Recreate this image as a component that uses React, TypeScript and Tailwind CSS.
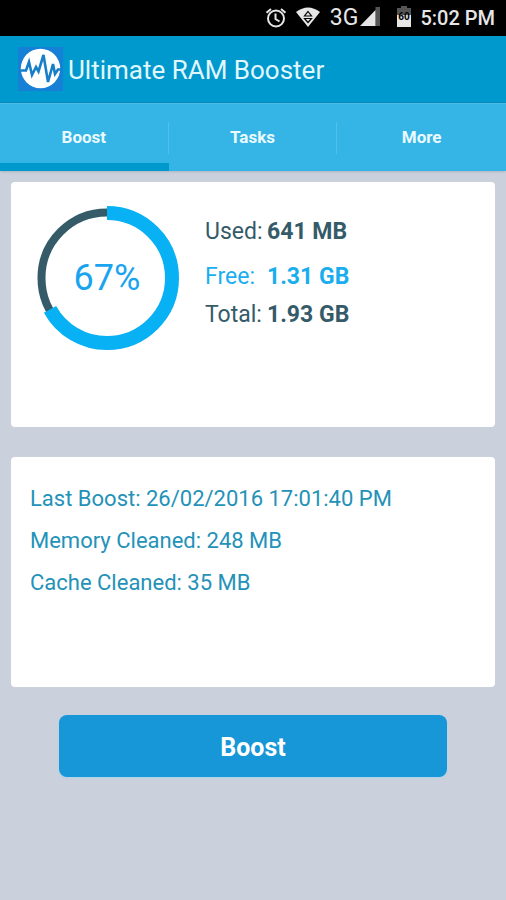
const tabs = ["Boost", "Tasks", "More"];

const memory = [
  { label: "Used:", value: "641 MB", className: "mb-[15px] text-[#355b69]" },
  { label: "Free:", value: "1.31 GB", className: "mb-2 text-[#1aaeee]" },
  { label: "Total:", value: "1.93 GB", className: "text-[#355b69]" },
];

const stats = [
  "Last Boost: 26/02/2016 17:01:40 PM",
  "Memory Cleaned: 248 MB",
  "Cache Cleaned: 35 MB",
];

function StatusBar() {
  return (
    <div className="flex h-9 items-center justify-end bg-black pr-[11px] text-[#e6e6e6]">
      <svg className="mr-2 h-6 w-6" viewBox="0 0 24 24" fill="none" stroke="currentColor" strokeWidth="2">
        <circle cx="12" cy="12.500" r="8" />
        <path d="M11.500 7.500v5.500l4 2.500M2.500 6.800l4.500-3.800M21.500 6.800l-4.500-3.800" />
      </svg>
      <svg className="mr-2.5 h-6 w-6" viewBox="0 0 24 24">
        <path d="M0 6Q12-3 24 6L12 21z" fill="currentColor" />
        <path d="M12 5.500l3.500 4.500h-7zM8.500 12.500h7l-3.500 4z" fill="none" stroke="black" strokeWidth="1.200" />
      </svg>
      <span className="text-[23px] leading-6">3G</span>
      <svg className="mr-4 ml-0.5 h-6 w-5" viewBox="0 0 20 24">
        <path d="M15.500 1H20v19h-4.500z" fill="#555" />
        <path d="M15.500 4v16H0z" fill="currentColor" />
      </svg>
      <svg className="mr-2 h-6 w-4" viewBox="0 0 16 24">
        <path d="M5 0h6v2h4v8H1V2h4z" fill="#555" />
        <path d="M1 9h14v12H1z" fill="currentColor" />
        <text x="8" y="14" textAnchor="middle" fontSize="10" fontWeight="bold">60</text>
      </svg>
      <span className="text-xl font-medium">5:02 PM</span>
    </div>
  );
}

function Logo() {
  return (
    <svg className="h-11 w-[45px]" viewBox="0 0 45 44">
      <path d="M0 0h45v44H0z" fill="#167fd6" />
      <circle cx="22.500" cy="21.500" r="19.700" fill="white" />
      <path
        d="M3 23.500h5L11 15l3 13 4-8 2.500 4.500L25.500 8l4.500 27 5-18 2 10 3-4.500h3"
        fill="none"
        stroke="#167fc8"
        strokeWidth="2.600"
      />
    </svg>
  );
}

function UsageRing({ percent }: { percent: number }) {
  return (
    <div className="relative h-36 w-36">
      <svg className="h-full w-full -rotate-90" viewBox="0 0 144 144" fill="none">
        <circle cx="72" cy="72" r="65.500" stroke="#355b69" strokeWidth="8" />
        <circle
          cx="72"
          cy="72"
          r="65"
          stroke="#08b1f3"
          strokeWidth="14"
          pathLength="100"
          strokeDasharray={`${percent} 100`}
        />
      </svg>
      <span className="absolute inset-0 flex items-center justify-center text-4xl text-[#1aa3ee]">
        {percent}%
      </span>
    </div>
  );
}

export default function App() {
  return (
    <div className="flex min-h-screen flex-col bg-[#cad0dc] font-['Roboto',sans-serif]">
      <StatusBar />
      <header className="flex h-[67px] items-center gap-[5px] border-b border-[#058fc0] bg-[#0099cd] px-[18px]">
        <Logo />
        <h1 className="pt-0.5 text-[26px] text-[#e1f7fe]">Ultimate RAM Booster</h1>
      </header>
      <nav className="flex h-[68px] border-t border-[#4bbce8] bg-[#34b5e6] shadow">
        {tabs.map((tab, i) => (
          <button
            key={tab}
            className={
              "flex flex-1 items-center text-[17px] font-bold text-[#ebfaff] " +
              (i === 0 ? "border-b-8 border-[#0099cd] pt-2" : "")
            }
          >
            <span
              className={
                "flex h-8 flex-1 items-center justify-center " +
                (i < tabs.length - 1 ? "border-r border-[#51c0eb]" : "")
              }
            >
              {tab}
            </span>
          </button>
        ))}
      </nav>

      <main className="flex flex-col px-[11px] pt-[11px]">
        <section className="flex min-h-[245px] items-start gap-[26px] rounded bg-white px-6 pt-6">
          <UsageRing percent={67} />
          <dl className="pt-[11px] text-[23px] leading-[30px]">
            {memory.map((row) => (
              <div key={row.label} className={"flex " + row.className}>
                <dt className="w-[62px]">{row.label}</dt>
                <dd className="font-bold">{row.value}</dd>
              </div>
            ))}
          </dl>
        </section>

        <section className="mt-[30px] min-h-[230px] rounded bg-white px-[19px] pt-[21px] text-[22px] leading-[42px] text-[#2492b8]">
          {stats.map((line) => (
            <p key={line}>{line}</p>
          ))}
        </section>

        <button className="mx-12 mt-7 h-[62px] rounded-lg bg-[#1797d7] pt-1 text-[25px] font-bold text-white shadow-[0_1px_2px_#a9d5ec]">
          Boost
        </button>
      </main>
    </div>
  );
}
